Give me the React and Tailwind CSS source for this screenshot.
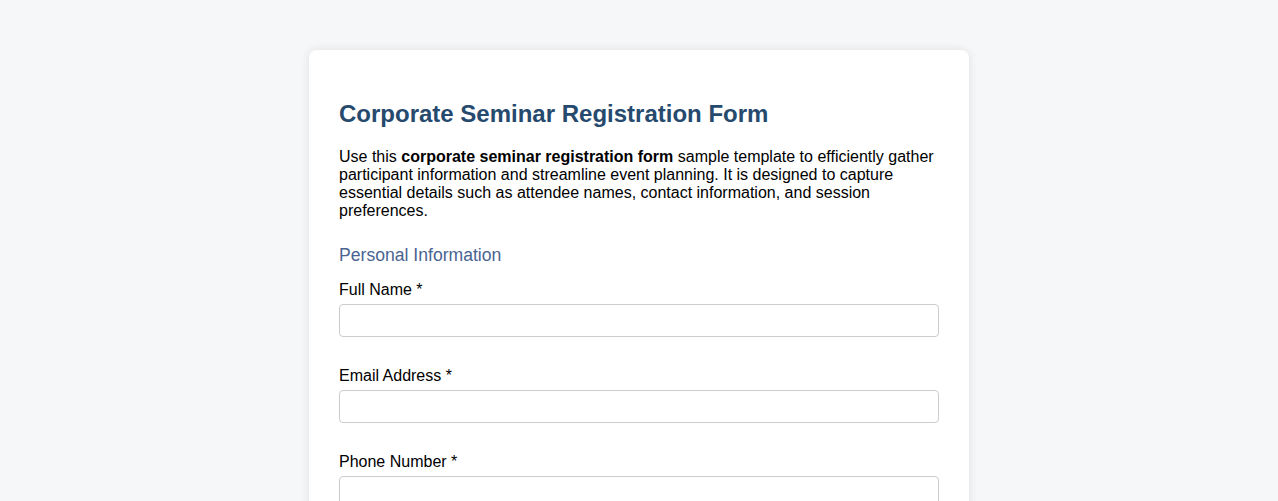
import React from 'react';

const fields = [
  { label: 'Full Name *', type: 'text' },
  { label: 'Email Address *', type: 'email' },
  { label: 'Phone Number *', type: 'tel' },
];

export default function App() {
  return (
    <div className="min-h-screen bg-[#f6f7f9] pt-[50px] font-['Liberation_Sans',Arial,sans-serif] text-black">
      <div className="mx-auto w-[660px] rounded-lg bg-white px-[30px] pt-[30px] pb-[30px] shadow-[0_0_10px_rgba(0,0,0,0.1)]">
        <h1 className="mt-[20px] text-[24px] leading-[28px] font-bold text-[#264a6e]">
          Corporate Seminar Registration Form
        </h1>
        <p className="mt-[20px] text-[16px] leading-[18px]">
          Use this <strong className="font-bold">corporate seminar registration form</strong> sample template to efficiently gather
          participant information and streamline event planning. It is designed to capture essential details such as attendee
          names, contact information, and session preferences.
        </p>
        <h2 className="mt-[25px] text-[17.6px] leading-[21px] text-[#4a6491]">Personal Information</h2>
        <div className="mt-[15px] flex flex-col gap-[30px]">
          {fields.map((f) => (
            <div key={f.label}>
              <label className="block text-[16px] leading-[18px]">{f.label}</label>
              <input
                type={f.type}
                className="mt-[5px] block h-[33px] w-[600px] rounded border border-[#ccc] bg-white px-2"
              />
            </div>
          ))}
        </div>
      </div>
    </div>
  );
}
